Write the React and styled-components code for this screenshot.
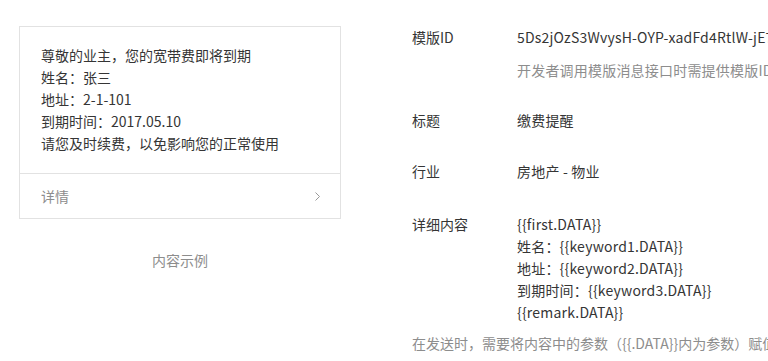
import React from 'react';
import styled, { createGlobalStyle } from 'styled-components';

const GlobalStyle = createGlobalStyle`
  html, body {
    margin: 0;
    padding: 0;
    background: #fff;
    overflow: hidden;
  }
  body {
    font-family: "Noto Sans CJK SC", "Noto Sans", sans-serif;
    font-size: 14px;
    color: #353535;
  }
`;

const Page = styled.div`
  display: flex;
  align-items: flex-start;
  width: 768px;
  height: 361px;
  overflow: hidden;
  padding: 26px 0 0 19px;
  box-sizing: border-box;
`;

const Preview = styled.div`
  width: 322px;
  flex-shrink: 0;
  display: flex;
  flex-direction: column;
  align-items: center;
`;

const Card = styled.div`
  width: 100%;
  box-sizing: border-box;
  border: 1px solid #e2e2e2;
  background: #fff;
`;

const CardBody = styled.div`
  padding: 17px 21px 19px;
  line-height: 22px;
`;

const Line = styled.div`
  white-space: nowrap;
`;

const CardFooter = styled.div`
  display: flex;
  align-items: center;
  justify-content: space-between;
  height: 44px;
  padding: 0 20px 0 21px;
  border-top: 1px solid #e2e2e2;
  color: #8d8d8d;
`;

const Caption = styled.div`
  margin-top: 30px;
  line-height: 22px;
  color: #8d8d8d;
`;

const Info = styled.div`
  margin-left: 71px;
  display: flex;
  flex-direction: column;
  line-height: 22px;
  white-space: nowrap;
`;

const Row = styled.div`
  display: flex;
  margin-bottom: ${p => p.$gap}px;
`;

const Label = styled.div`
  width: 105px;
  flex-shrink: 0;
`;

const Value = styled.div`
  display: flex;
  flex-direction: column;
  letter-spacing: 0.2px;
`;

const Hint = styled.div`
  color: #8d8d8d;
  margin-top: ${p => p.$top || 0}px;
`;

function Chevron() {
  return (
    <svg width="5" height="9" viewBox="0 0 5 9">
      <path d="M0.5 0.5l4 4-4 4" fill="none" stroke="#999" strokeWidth="1" />
    </svg>
  );
}

export default function App() {
  return (
    <>
      <GlobalStyle />
      <Page>
        <Preview>
          <Card>
            <CardBody>
              <Line>尊敬的业主，您的宽带费即将到期</Line>
              <Line>姓名：张三</Line>
              <Line>地址：2-1-101</Line>
              <Line>到期时间：2017.05.10</Line>
              <Line>请您及时续费，以免影响您的正常使用</Line>
            </CardBody>
            <CardFooter>
              <span>详情</span>
              <Chevron />
            </CardFooter>
          </Card>
          <Caption>内容示例</Caption>
        </Preview>
        <Info>
          <Row $gap={28}>
            <Label>模版ID</Label>
            <Value>
              <span>5Ds2jOzS3WvysH-OYP-xadFd4RtlW-jE7o2nC9kVcGq</span>
              <Hint $top={11}>开发者调用模版消息接口时需提供模版ID</Hint>
            </Value>
          </Row>
          <Row $gap={29}>
            <Label>标题</Label>
            <Value>缴费提醒</Value>
          </Row>
          <Row $gap={31}>
            <Label>行业</Label>
            <Value>房地产 - 物业</Value>
          </Row>
          <Row $gap={9}>
            <Label>详细内容</Label>
            <Value>
              <span>{'{{first.DATA}}'}</span>
              <span>姓名：{'{{keyword1.DATA}}'}</span>
              <span>地址：{'{{keyword2.DATA}}'}</span>
              <span>到期时间：{'{{keyword3.DATA}}'}</span>
              <span>{'{{remark.DATA}}'}</span>
            </Value>
          </Row>
          <Hint>在发送时，需要将内容中的参数（{'{{.DATA}}'}内为参数）赋值替换为需要的信息</Hint>
        </Info>
      </Page>
    </>
  );
}
